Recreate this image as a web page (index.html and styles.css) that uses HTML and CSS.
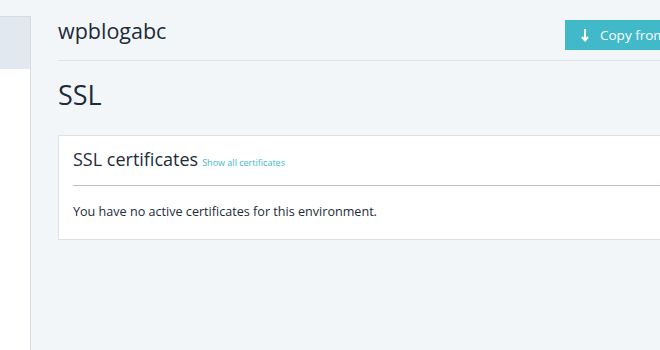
FILE: index.html
```html
<!DOCTYPE html>
<html lang="en">
<head>
    <meta charset="UTF-8">
    <meta name="viewport" content="width=device-width, initial-scale=1.0">
    <title>SSL - wpblogabc</title>
    <link rel="stylesheet" href="styles.css">
</head>
<body>
    <div class="layout">
        <aside class="sidebar">
            <div class="sidebar-head"></div>
        </aside>

        <main class="main">
            <div class="env-header">
                <h1 class="env-name">wpblogabc</h1>
                <button class="copy-button">
                    <svg class="copy-icon" width="10" height="14" viewBox="0 0 10 14">
                        <path d="M5 1 V12 M2 9 L5 12.5 L8 9" fill="none" stroke="#fff" stroke-width="2"/>
                    </svg>
                    Copy from live
                </button>
            </div>

            <h2 class="page-title">SSL</h2>

            <div class="card">
                <div class="card-head">
                    <h3>SSL certificates</h3>
                    <a href="#" class="card-link">Show all certificates</a>
                </div>
                <p class="empty">You have no active certificates for this environment.</p>
            </div>
        </main>
    </div>
</body>
</html>
```

FILE: styles.css
```css
body {
    font-family: "Open Sans", Arial, sans-serif;
    background-color: #f3f6f9;
    color: #1d2b3a;
    margin: 0;
    overflow: hidden;
}

.layout {
    display: flex;
    width: 820px;
    min-height: 350px;
}

.sidebar {
    width: 30px;
    flex-shrink: 0;
    margin-top: 16px;
    background: white;
    border-right: 1px solid #d6dce2;
    border-top: 1px solid #d6dce2;
}

.sidebar-head {
    height: 52px;
    background-color: #e1e8ef;
}

.main {
    flex: 1;
    padding-left: 27px;
}

.env-header {
    display: flex;
    align-items: flex-start;
    height: 60px;
    border-bottom: 1px solid #dfe4e9;
}

.env-name {
    width: 507px;
    margin: 16px 0 0;
    font-size: 21.5px;
    font-weight: 400;
    line-height: 30px;
}

.copy-button {
    margin-top: 20px;
    height: 30px;
    padding: 0 14px 0 15px;
    display: flex;
    align-items: center;
    gap: 10px;
    border: none;
    background-color: #41b9c9;
    color: white;
    font-family: inherit;
    font-size: 13.5px;
    white-space: nowrap;
}

.page-title {
    margin: 17px 0 0;
    font-size: 27px;
    font-weight: 400;
    line-height: 34px;
}

.card {
    margin-top: 23px;
    background: white;
    border: 1px solid #dde0e4;
    padding: 0 0 0 14px;
    height: 103px;
}

.card-head {
    display: flex;
    align-items: baseline;
    gap: 4px;
    margin-top: 9px;
    padding-bottom: 12px;
    border-bottom: 1px solid #b9c2cc;
}

.card-head h3 {
    margin: 0;
    font-size: 18px;
    font-weight: 400;
    line-height: 28px;
}

.card-link {
    color: #41b9c9;
    font-size: 9px;
    text-decoration: none;
}

.empty {
    margin: 17px 0 0;
    font-size: 12.6px;
}
```
